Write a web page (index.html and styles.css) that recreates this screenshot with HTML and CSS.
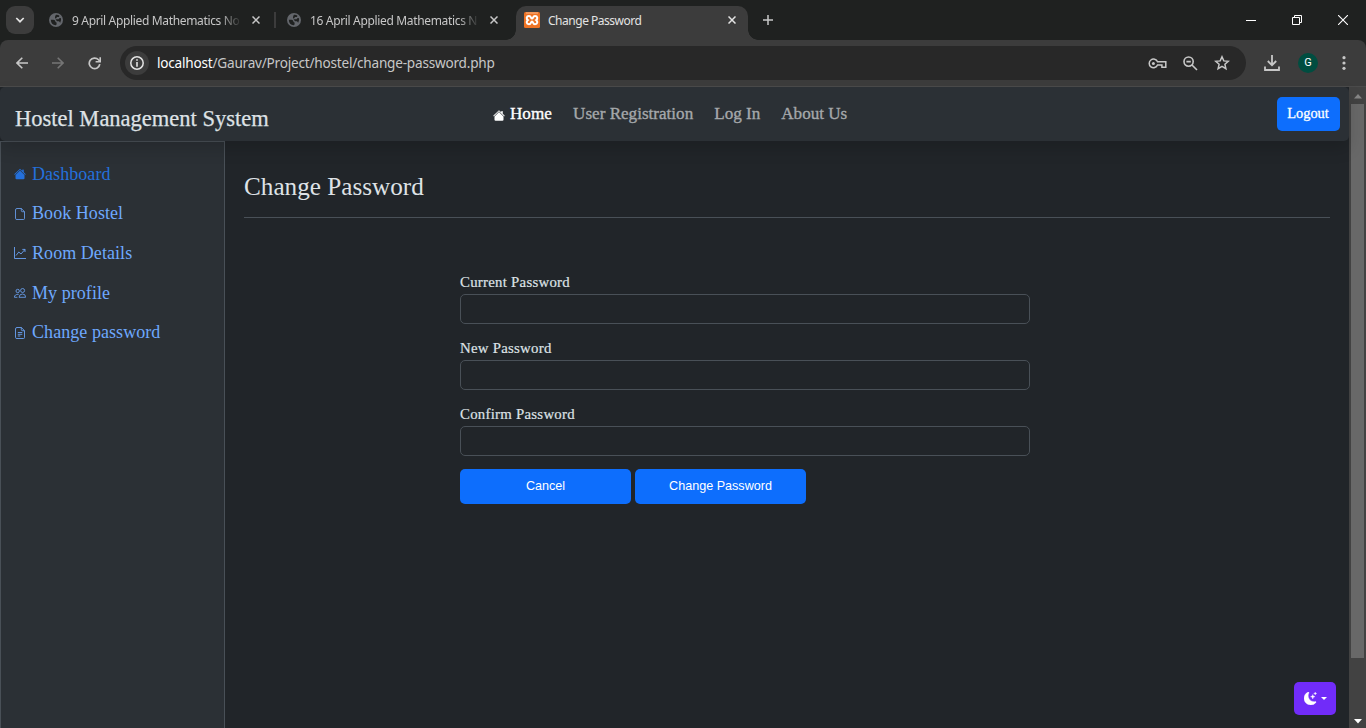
FILE: index.html
```html
<!DOCTYPE html>
<html lang="en">
<head>
<meta charset="utf-8">
<title>Change Password</title>
<link rel="stylesheet" href="styles.css">
</head>
<body>
<svg class="defs" width="0" height="0">
  <symbol id="globe" viewBox="0 0 14 14"><circle cx="7" cy="7" r="7" fill="#63666b"/><path d="M1.800 6.800H4.500q1.700 0 1.900 1.600.2 1 1.200 1v1.400q0 1-.8 1.500Q2 12 1.800 6.800ZM7 1.800Q9.200 1.600 10.400 2.700L10 4H8q-.6 1.600-2 1.600V4.200Q6 3 7 1.800ZM6.500 6.200h3.100l1-1.200h1.200Q12.800 7.600 11.200 9.800L10 8.300H8z" fill="#1f2120"/></symbol>
  <symbol id="close" viewBox="0 0 8 8"><path d="M.5.5l7 7M7.500.5l-7 7" fill="none" stroke="currentColor" stroke-width="1.500"/></symbol>
  <symbol id="house" viewBox="0 0 16 16"><path d="M8.700 1.500a1 1 0 0 0-1.400 0L.6 8.100a.5.500 0 0 0 .8.800L8 2.200l6.600 6.700a.5.500 0 0 0 .8-.8L13 5.800V2.500a.5.500 0 0 0-.5-.5h-1a.5.500 0 0 0-.5.500v1.300z" fill="currentColor"/><path d="m8 3.300 6 6v4.200a1.500 1.500 0 0 1-1.500 1.500h-9A1.500 1.500 0 0 1 2 13.500V9.300z" fill="currentColor"/></symbol>
</svg>

<header class="tabs">
  <button class="tab-search"><svg width="10" height="6" viewBox="0 0 10 6"><path d="M1.300 1l3.700 3.700L8.700 1" fill="none" stroke="#e3e3e3" stroke-width="1.700"/></svg></button>
  <div class="tab tab-first"><svg width="14" height="14"><use href="#globe"/></svg><span class="tab-title fade">9 April Applied Mathematics No</span><svg class="x" width="8" height="8"><use href="#close"/></svg></div>
  <i class="tab-divider"></i>
  <div class="tab tab-second"><svg width="14" height="14"><use href="#globe"/></svg><span class="tab-title fade">16 April Applied Mathematics N</span><svg class="x" width="8" height="8"><use href="#close"/></svg></div>
  <div class="tab tab-active"><svg width="16" height="16" viewBox="0 0 16 16"><rect width="16" height="16" rx="1.500" fill="#ee7324"/><path d="M2 1h12" stroke="#f7b98d"/><path d="M5 4C7.400 4 6.600 6.600 8 6.600S8.600 4 11 4C13.800 4 13.800 7 12.200 8.100 13.800 9.200 13.800 12.200 11 12.200 8.600 12.200 9.400 9.600 8 9.600S7.400 12.200 5 12.200C2.200 12.200 2.200 9.200 3.800 8.100 2.200 7 2.200 4 5 4z" fill="none" stroke="#fff" stroke-width="2"/></svg><span class="tab-title">Change Password</span><svg class="x" width="8" height="8"><use href="#close"/></svg></div>
  <svg class="new-tab" width="10" height="10" viewBox="0 0 10 10"><path d="M5 0v10M0 5h10" stroke="#c7c7c7" stroke-width="1.500"/></svg>
  <div class="window-controls">
    <svg width="10" height="10" viewBox="0 0 10 10"><path d="M0 5.500h10" stroke="#fff"/></svg>
    <svg width="10" height="10" viewBox="0 0 10 10"><path d="M.5 2.500h7v7h-7zM2.500 2.500v-2h7v7h-2" fill="none" stroke="#fff"/></svg>
    <svg width="10" height="10" viewBox="0 0 10 10"><path d="M0 0l10 10M10 0L0 10" stroke="#fff" stroke-width="1.100"/></svg>
  </div>
</header>

<div class="toolbar-back">
<div class="toolbar">
  <svg class="back" width="12" height="12" viewBox="0 0 12 12"><path d="M12 6H1M6.300.7L1 6l5.300 5.300" fill="none" stroke="#c7c7c7" stroke-width="1.600"/></svg>
  <svg class="forward" width="12" height="12" viewBox="0 0 12 12"><path d="M0 6h11M5.700.7L11 6l-5.300 5.300" fill="none" stroke="#757575" stroke-width="1.600"/></svg>
  <svg class="reload" width="13" height="13" viewBox="0 0 13 13"><path d="M11.800 7.200a5.300 5.300 0 1 1-1.300-4.400L11.800 4.200" fill="none" stroke="#c7c7c7" stroke-width="1.700"/><path d="M12.200.3v4.500H7.600" fill="none" stroke="#c7c7c7" stroke-width="1.600"/></svg>
  <div class="address">
    <span class="info"><svg width="14" height="14" viewBox="0 0 14 14"><circle cx="7" cy="7" r="6.200" fill="none" stroke="#e3e3e3" stroke-width="1.500"/><path d="M7 3.200v1.600M7 6v4.700" stroke="#e3e3e3" stroke-width="1.600"/></svg></span>
    <span class="url"><b>localhost</b>/Gaurav/Project/hostel/change-password.php</span>
    <span class="address-icons">
      <svg width="19" height="11" viewBox="0 0 19 11"><path d="M9.500 3.800H17.800V9.200H13.900V7H9.500A4.300 4.300 0 1 1 9.500 3.800Z" fill="none" stroke="#c7c7c7" stroke-width="1.500"/><circle cx="5.400" cy="5.400" r="1.500" fill="#c7c7c7"/></svg>
      <svg width="15" height="15" viewBox="0 0 15 15"><circle cx="5.600" cy="5.600" r="4.600" fill="none" stroke="#c7c7c7" stroke-width="1.600"/><path d="M3.400 5.600h4.400M9 9l5 5" stroke="#c7c7c7" stroke-width="1.600"/></svg>
      <svg width="16" height="16" viewBox="0 0 16 16"><path d="M8 1.800l1.800 4.100 4.500.4-3.400 3 1 4.400L8 11.300l-3.900 2.400 1-4.400-3.400-3 4.500-.4z" fill="none" stroke="#c7c7c7" stroke-width="1.500"/></svg>
    </span>
  </div>
  <svg class="download" width="16" height="17" viewBox="0 0 16 17"><path d="M8 0v10M3.800 6L8 10.200 12.200 6M1 11.500V15h14v-3.500" fill="none" stroke="#c7c7c7" stroke-width="1.800"/></svg>
  <span class="avatar">G</span>
  <svg class="more" width="4" height="14" viewBox="0 0 4 14"><g fill="#c7c7c7"><circle cx="2" cy="1.700" r="1.600"/><circle cx="2" cy="7" r="1.600"/><circle cx="2" cy="12.300" r="1.600"/></g></svg>
</div>
</div>

<div class="viewport">
  <div class="page">
    <nav class="navbar">
      <a class="brand">Hostel Management System</a>
      <div class="nav-links">
        <a class="active"><svg width="13" height="13"><use href="#house"/></svg>Home</a>
        <a>User Registration</a>
        <a>Log In</a>
        <a>About Us</a>
      </div>
      <button class="logout">Logout</button>
    </nav>
    <div class="layout">
      <aside class="sidebar">
        <a class="current"><svg width="12" height="12"><use href="#house"/></svg>Dashboard</a>
        <a><svg width="12" height="12" viewBox="0 0 12 12"><path d="M7.300.5H3q-1.500 0-1.500 1.500v8.500q0 1 1.500 1h6.500q1 0 1-1V3.700zM7.300.5v2q0 1.200 1.200 1.200h2" fill="none" stroke="currentColor" stroke-width=".8"/></svg>Book Hostel</a>
        <a><svg width="12" height="12" viewBox="0 0 12 12"><path d="M.5 0v11.500H12M2 8.500L4.800 5 7 7l4-4.600M8.300 2.400H11V5" fill="none" stroke="currentColor" stroke-width=".85"/></svg>Room Details</a>
        <a><svg width="12" height="12" viewBox="0 0 12 12"><g fill="none" stroke="currentColor" stroke-width=".8"><circle cx="3.700" cy="4" r="1.700"/><circle cx="8.600" cy="3.500" r="2"/><path d="M5 10.300Q5.300 7 8.500 7t3.100 3.300zM3.400 10.300h-3Q.4 7.200 4.700 7.300"/></g></svg>My profile</a>
        <a><svg width="12" height="12" viewBox="0 0 12 12"><path d="M7.300.5H3q-1.500 0-1.500 1.500v8.500q0 1 1.500 1h6.500q1 0 1-1V3.700zM7.300.5v2q0 1.200 1.200 1.200h2M3.800 5.500h4.500M3.800 7.300h4.500M3.800 9h2.500" fill="none" stroke="currentColor" stroke-width=".85"/></svg>Change password</a>
      </aside>
      <main class="content">
        <h1>Change Password</h1>
        <form class="form">
          <label>Current Password</label><input type="password">
          <label>New Password</label><input type="password">
          <label>Confirm Password</label><input type="password">
          <div class="actions"><button type="button">Cancel</button><button type="button">Change Password</button></div>
        </form>
      </main>
    </div>
  </div>
  <div class="scrollbar">
    <svg width="8" height="5" viewBox="0 0 8 5"><path d="M4 0l4 4.500H0z" fill="#868686"/></svg>
    <i class="thumb"></i>
    <svg width="8" height="5" viewBox="0 0 8 5"><path d="M4 4.500L0 0h8z" fill="#fff"/></svg>
  </div>
</div>
<button class="theme"><svg width="13" height="13" viewBox="0 0 16 16"><path d="M6 .3a.8.800 0 0 1 .1.800 7.200 7.200 0 0 0-.9 3.500c0 4 3.300 7.300 7.300 7.300q.8 0 1.500-.2a.8.800 0 0 1 .8.300.7.700 0 0 1 0 .800A8.300 8.300 0 0 1 8.300 16C3.700 16 0 12.300 0 7.700 0 4.300 2.100 1.300 5.100.1A.8.800 0 0 1 6 .3M10.800 3.100l.5 1.200q.3.700 1 1l1.300.5-1.300.5q-.7.300-1 1l-.5 1.300-.5-1.300q-.3-.7-1-1L8 5.800l1.300-.5q.7-.3 1-1zM13.800.1l.3.800q.2.500.7.700l.9.300-.9.300q-.5.200-.7.700l-.3.900-.3-.9q-.2-.5-.7-.7l-.9-.3.900-.3q.5-.2.700-.7z" fill="#fff" stroke="#fff" stroke-width=".4"/></svg><svg width="6" height="3" viewBox="0 0 6 3"><path d="M0 0h6L3 3z" fill="#fff"/></svg></button>
</body>
</html>
```

FILE: styles.css
```css
* { box-sizing: border-box; }
body { margin: 0; width: 1366px; height: 728px; overflow: hidden; background: #212529; font-family: "Liberation Serif", serif; position: relative; }
svg { display: block; flex: none; }
.defs { position: absolute; }
button { border: 0; margin: 0; padding: 0; }

/* tab strip */
.tabs { display: flex; align-items: center; height: 40px; background: #1f2120; font: 12px/16px "Noto Sans", sans-serif; color: #c7c7c7; }
.tab-search { display: flex; align-items: center; justify-content: center; width: 28px; height: 28px; margin-left: 6px; border-radius: 9px; background: #3c3c3c; }
.tab { display: flex; align-items: center; height: 34px; }
.tab-first { width: 227px; margin-left: 15px; }
.tab-second { width: 211px; margin-left: 11px; }
.tab-title { width: 170px; margin-left: 9px; padding-top: 2px; white-space: nowrap; letter-spacing: -.34px; }
.fade { -webkit-mask-image: linear-gradient(90deg, #000 148px, transparent 170px); mask-image: linear-gradient(90deg, #000 148px, transparent 170px); }
.tab .x { margin-left: 10px; }
.tab-divider { width: 2px; height: 16px; margin-left: -2px; background: #3c3c3c; }
.tab-active { position: relative; width: 232px; align-self: flex-end; margin-left: 18px; padding: 0 0 6px 8px; background: #3c3c3c; border-radius: 10px 10px 0 0; color: #e3e3e3; }
.tab-active .tab-title { width: 171px; margin-left: 8px; letter-spacing: -.48px; }
.tab-active .x { margin-left: 9px; }
.tab-active::before, .tab-active::after { content: ""; position: absolute; bottom: 0; width: 10px; height: 10px; }
.tab-active::before { left: -10px; background: radial-gradient(circle at 0 0, transparent 9.5px, #3c3c3c 10px); }
.tab-active::after { right: -10px; background: radial-gradient(circle at 100% 0, transparent 9.5px, #3c3c3c 10px); }
.new-tab { margin-left: 15px; }
.window-controls { display: flex; gap: 36px; margin-left: auto; padding-right: 18px; }

/* toolbar */
.toolbar-back { background: #1f2120; }
.toolbar { display: flex; align-items: center; height: 47px; background: #3c3c3c; border-radius: 8px 8px 0 0; border-bottom: 1px solid #4b4b4b; }
.back { margin-left: 16px; }
.forward { margin-left: 24px; }
.reload { margin-left: 24px; }
.address { display: flex; align-items: center; width: 1126px; height: 34px; margin-left: 19px; padding: 0 16px 0 5px; border-radius: 17px; background: #282828; }
.info { display: flex; align-items: center; justify-content: center; width: 24px; height: 24px; border-radius: 50%; background: #3c3c3c; }
.url { margin-left: 8px; font: 13.6px/20px "Noto Sans", sans-serif; letter-spacing: -.22px; color: #c7c7c7; }
.url b { font-weight: 400; color: #fff; }
.address-icons { display: flex; align-items: center; gap: 16px; margin-left: auto; }
.download { margin-left: 18px; }
.avatar { width: 20px; height: 20px; margin-left: 18px; border-radius: 50%; background: #004d40; color: #fff; font: 11px/20px Roboto, sans-serif; text-align: center; }
.more { margin-left: 24px; }

/* web page */
.viewport { display: flex; height: 641px; }
.page { width: 1349px; display: flex; flex-direction: column; }
.navbar { position: relative; display: flex; height: 54px; background: #2b3035; border-radius: 5px; box-shadow: 0 8px 16px rgba(0, 0, 0, .15); }
.brand { width: 478px; padding: 19px 0 0 15px; font-size: 22.5px; line-height: 25px; color: #dee2e6; -webkit-text-stroke: .25px; }
.nav-links { display: flex; gap: 21px; margin-left: 15px; padding-top: 16px; font-size: 17.1px; line-height: 22px; color: #a5a8ab; -webkit-text-stroke: .35px; white-space: nowrap; }
.nav-links a { display: flex; }
.nav-links svg { width: 12px; margin: 6px 5px 0 0; }
.nav-links .active { margin-right: .3px; color: #fff; }
.logout { width: 63px; height: 34px; margin: 10px 9px 0 auto; padding: 0 1px 2px 0; border-radius: 5px; background: #0d6efd; color: #fff; font: 14.4px/20px "Liberation Serif", serif; -webkit-text-stroke: .3px; }
.layout { display: flex; flex: 1; }
.sidebar { display: flex; flex-direction: column; gap: 13.6px; width: 225px; padding: 18.800px 13px; border: 1px solid #495057; border-bottom: 0; background: #2b3035; font-size: 18px; line-height: 26px; letter-spacing: .06px; color: #6ea8fe; }
.sidebar a { display: flex; align-items: center; }
.sidebar svg { margin: 1px 6px 0 0; }
.sidebar .current { color: #2470dc; }
.content { width: 1124px; padding: 30px 19px; }
h1 { height: 47px; margin: 0; border-bottom: 1px solid #495057; color: #dee2e6; font-size: 25.2px; font-weight: 400; line-height: 31px; }
.form { display: flex; flex-direction: column; width: 570px; margin: 53px 0 0 216px; }
.form label { height: 23px; font-size: 14.8px; line-height: 22px; letter-spacing: .27px; color: #dee2e6; -webkit-text-stroke: .2px; }
.form input { height: 30px; margin: 0 0 13px; padding: 0 11px; border: 1px solid #495057; border-radius: 5px; background: #212529; }
.actions { display: flex; gap: 4px; }
.actions button { width: 171px; height: 35px; padding-bottom: 2px; border-radius: 5px; background: #0d6efd; color: #fff; font: 12.6px/18px "Liberation Sans", sans-serif; }
.scrollbar { display: flex; flex-direction: column; align-items: center; width: 17px; padding: 7px 0 4px; background: #424242; }
.thumb { width: 13px; height: 554px; margin: 5px 0 auto; background: #686868; }
.theme { position: absolute; left: 1294px; top: 682px; display: flex; align-items: center; justify-content: center; gap: 4px; width: 42px; height: 33px; padding-bottom: 1px; border-radius: 5px; background: #712cf9; }
```
